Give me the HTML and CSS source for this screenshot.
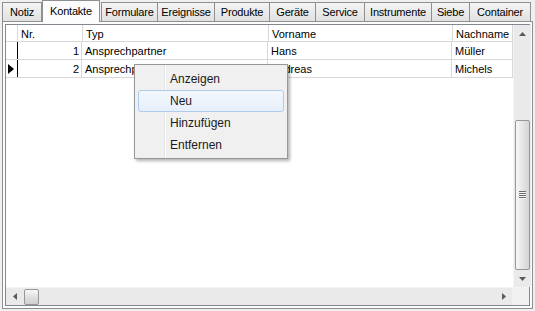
FILE: index.html
```html
<!DOCTYPE html>
<html lang="de">
<head>
    <meta charset="UTF-8">
    <title>Kontakte</title>
    <link rel="stylesheet" href="styles.css">
</head>
<body>
    <div class="window">
        <div class="tabs">
            <div class="tab t-notiz">Notiz</div>
            <div class="tab active t-kontakte">Kontakte</div>
            <div class="tab t-formulare">Formulare</div>
            <div class="tab t-ereignisse">Ereignisse</div>
            <div class="tab t-produkte">Produkte</div>
            <div class="tab t-geraete">Geräte</div>
            <div class="tab t-service">Service</div>
            <div class="tab t-instrumente">Instrumente</div>
            <div class="tab t-siebe">Siebe</div>
            <div class="tab t-container">Container</div>
        </div>
        <div class="panel">
            <div class="grid">
                <div class="grid-main">
                    <div class="table">
                        <div class="row head">
                            <div class="cell ind"></div>
                            <div class="cell nr">Nr.</div>
                            <div class="cell typ">Typ</div>
                            <div class="cell vorname">Vorname</div>
                            <div class="cell nachname">Nachname</div>
                        </div>
                        <div class="row">
                            <div class="cell ind"></div>
                            <div class="cell nr num">1</div>
                            <div class="cell typ">Ansprechpartner</div>
                            <div class="cell vorname">Hans</div>
                            <div class="cell nachname">Müller</div>
                        </div>
                        <div class="row">
                            <div class="cell ind current">
                                <svg width="6" height="10" viewBox="0 0 6 10"><path d="M0 0 L6 5 L0 10 Z" fill="#000"/></svg>
                            </div>
                            <div class="cell nr num">2</div>
                            <div class="cell typ">Ansprechpartner</div>
                            <div class="cell vorname">Andreas</div>
                            <div class="cell nachname">Michels</div>
                        </div>
                    </div>
                    <div class="vscroll">
                        <div class="sbtn">
                            <svg width="7" height="4" viewBox="0 0 7 4"><path d="M0 4 L3.5 0 L7 4 Z" fill="#5a5a5a"/></svg>
                        </div>
                        <div class="vtrack">
                            <div class="vthumb">
                                <div class="grip"><span></span><span></span><span></span><span></span></div>
                            </div>
                        </div>
                        <div class="sbtn">
                            <svg width="7" height="4" viewBox="0 0 7 4"><path d="M0 0 L7 0 L3.5 4 Z" fill="#5a5a5a"/></svg>
                        </div>
                    </div>
                </div>
                <div class="hscroll">
                    <div class="sbtn">
                        <svg width="4" height="7" viewBox="0 0 4 7"><path d="M4 0 L0 3.5 L4 7 Z" fill="#5a5a5a"/></svg>
                    </div>
                    <div class="htrack">
                        <div class="hthumb"></div>
                    </div>
                    <div class="sbtn">
                        <svg width="4" height="7" viewBox="0 0 4 7"><path d="M0 0 L4 3.5 L0 7 Z" fill="#5a5a5a"/></svg>
                    </div>
                    <div class="corner"></div>
                </div>
            </div>
        </div>

        <div class="menu">
            <div class="menu-item">Anzeigen</div>
            <div class="menu-item hover">Neu</div>
            <div class="menu-item">Hinzufügen</div>
            <div class="menu-item">Entfernen</div>
        </div>
    </div>
</body>
</html>
```

FILE: styles.css
```css
body {
    margin: 0;
    background-color: #f0f0f0;
    font-family: "Liberation Sans", Arial, sans-serif;
    font-size: 11px;
    color: #000;
}
.window {
    position: relative;
    width: 535px;
    height: 311px;
    overflow: hidden;
}

/* tab strip */
.tabs {
    display: flex;
    align-items: flex-end;
    height: 21px;
    padding-left: 2px;
    position: relative;
    z-index: 2;
}
.tab {
    box-sizing: border-box;
    height: 19px;
    line-height: 18px;
    text-align: center;
    white-space: nowrap;
    letter-spacing: -0.2px;
    border: 1px solid #8e8f8f;
    border-bottom: none;
    background: linear-gradient(#f4f4f4, #e1e1e1);
    margin-right: -1px;
}
.tab.active {
    height: 22px;
    line-height: 20px;
    margin: 0 1px -1px 1px;
    background: #fcfcfc;
    position: relative;
    z-index: 3;
}
.t-notiz { width: 40px; }
.t-kontakte { width: 58px; }
.t-formulare { width: 57px; }
.t-ereignisse { width: 58px; }
.t-produkte { width: 56px; }
.t-geraete { width: 47px; }
.t-service { width: 50px; }
.t-instrumente { width: 68px; }
.t-siebe { width: 39px; }
.t-container { width: 62px; }

/* panel */
.panel {
    margin-left: 2px;
    width: 525px;
    height: 282px;
    border: 1px solid #8e8f8f;
    background-color: #fcfcfc;
    padding: 2px;
}
.grid {
    border: 1px solid #828790;
    background-color: #fff;
    height: 280px;
    display: flex;
    flex-direction: column;
}
.grid-main {
    display: flex;
    flex: 1;
}
.table {
    flex: 1;
}
.row {
    display: flex;
    height: 17px;
    border-bottom: 1px solid #d8d8d8;
    line-height: 18px;
}
.row.head {
    height: 16px;
    line-height: 18px;
}
.cell {
    border-right: 1px solid #d8d8d8;
    padding: 0 3px;
    white-space: nowrap;
    overflow: hidden;
}
.ind {
    width: 11px;
    padding: 0;
    border-right-color: #000;
    display: flex;
    align-items: center;
    justify-content: center;
}
.head .ind {
    border-right-color: #d8d8d8;
}
.ind.current svg {
    margin-left: -1px;
}
.nr {
    width: 58px;
}
.num {
    text-align: right;
    padding-right: 2px;
}
.typ {
    width: 179px;
}
.vorname {
    width: 177px;
}
.nachname {
    flex: 1;
}

/* scrollbars */
.vscroll {
    width: 17px;
    display: flex;
    flex-direction: column;
    background-color: #eaeaea;
    border-left: 1px solid #f4f4f4;
}
.sbtn {
    width: 17px;
    height: 17px;
    display: flex;
    align-items: center;
    justify-content: center;
}
.vtrack {
    flex: 1;
}
.vthumb {
    margin: 78px 1px 0 1px;
    height: 148px;
    border: 1px solid #979797;
    border-radius: 2px;
    background: linear-gradient(to right, #f7f7f7, #e6e6e6 50%, #d4d4d4);
    display: flex;
    align-items: center;
    justify-content: center;
}
.grip span {
    display: block;
    width: 7px;
    height: 1px;
    background-color: #6e6e6e;
    border-bottom: 1px solid #f4f4f4;
}
.hscroll {
    display: flex;
    height: 17px;
    background-color: #eaeaea;
    border-top: 1px solid #f4f4f4;
}
.htrack {
    flex: 1;
    display: flex;
    align-items: center;
}
.hthumb {
    margin-left: 1px;
    width: 13px;
    height: 14px;
    border: 1px solid #979797;
    border-radius: 2px;
    background: linear-gradient(#f7f7f7, #e0e0e0 50%, #d0d0d0);
}
.corner {
    width: 17px;
    background-color: #f0f0f0;
}

/* context menu */
.menu {
    position: absolute;
    left: 134px;
    top: 64px;
    width: 148px;
    padding: 3px 2px 2px 2px;
    border: 1px solid #979797;
    background: linear-gradient(to right, #f0f0f0 29px, #e2e3e3 29px, #e2e3e3 30px, #fff 30px, #fff 31px, #f0f0f0 31px);
    box-shadow: 2px 2px 3px rgba(0, 0, 0, 0.3);
    z-index: 5;
    font-size: 12px;
    color: #1a1a1a;
}
.menu-item {
    height: 20px;
    line-height: 20px;
    margin: 0 1px;
    padding-left: 31px;
    border: 1px solid transparent;
    border-radius: 3px;
}
.menu-item.hover {
    border-color: #aecbf0;
    background: linear-gradient(#f3f7fd, #e7effb);
}
```
